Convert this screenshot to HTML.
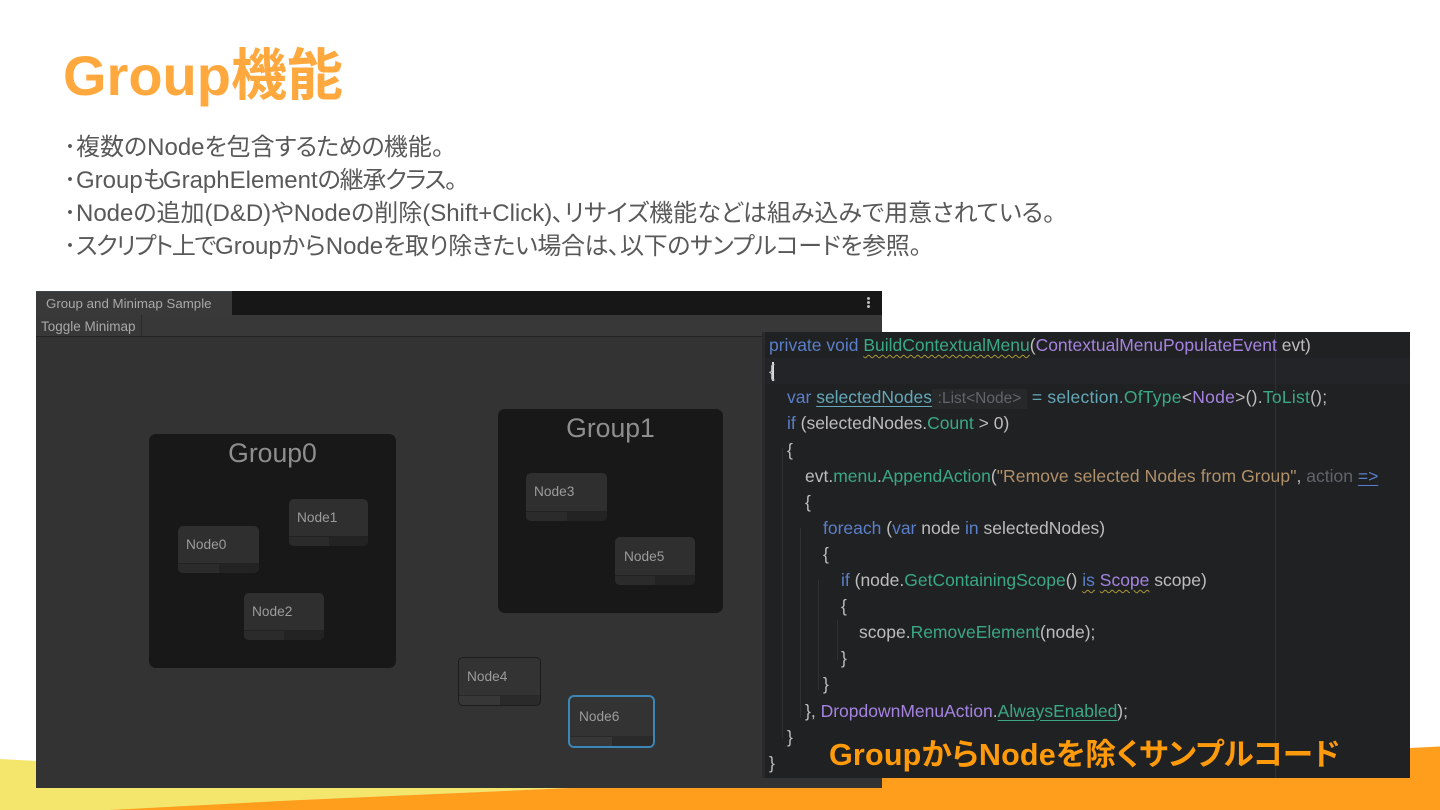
<!DOCTYPE html>
<html lang="ja">
<head>
<meta charset="utf-8">
<title>Group機能</title>
<style>
html,body{margin:0;padding:0;background:#fff;}
body{width:1440px;height:810px;overflow:hidden;position:relative;font-family:"Liberation Sans","Noto Sans CJK JP",sans-serif;}
.a{position:absolute;white-space:nowrap;}
#bg{position:absolute;left:0;top:0;}
.title{left:63px;top:41px;font-size:56px;line-height:70px;font-weight:bold;color:#ffa83e;}
.t{left:64px;font-size:24px;line-height:33px;color:#595959;font-feature-settings:"palt";}
#win{position:absolute;left:36px;top:291px;width:846px;height:497px;background:#333333;overflow:hidden;}
.tab{left:0;top:0;width:196px;height:24px;background:#393939;color:#a8a8a8;font-size:13.3px;line-height:24px;text-indent:10px;border-top:1px solid #3b4650;box-sizing:border-box;}
.tabbar{left:196px;top:0;width:650px;height:24px;background:#171717;}
.tool{left:0;top:24px;width:846px;height:21px;background:#383838;border-bottom:1px solid #232323;}
.tbtn{left:0;top:24px;width:105px;height:21px;border-right:1px solid #2a2a2a;color:#a8a8a8;font-size:13.5px;line-height:23px;text-indent:5px;}
.group{position:absolute;background:#181818;border-radius:7px;}
.gt{position:absolute;left:0;right:0;text-align:center;color:#8e8e8e;font-size:26.6px;line-height:30px;}
.node{position:absolute;background:#2f2f2f;border-radius:5px;overflow:hidden;box-sizing:border-box;}
.node .n{position:absolute;left:8px;top:11px;color:#9c9c9c;font-size:13.7px;line-height:16px;}
.node .b1{position:absolute;left:0;bottom:0;width:50%;height:9px;background:#2b2b2b;border-top:1px solid #222;}
.node .b2{position:absolute;right:0;bottom:0;width:50%;height:9px;background:#232323;border-top:1px solid #222;}
.out{background:#333333}
.out .b1{background:#373737;border-top-color:#292929}
.out .b2{background:#2a2a2a;border-top-color:#292929}
#code{position:absolute;left:762px;top:332px;width:648px;height:446px;background:#202123;overflow:hidden;}
.l{position:absolute;white-space:nowrap;font-size:17.5px;line-height:26px;color:#bdbdbd;}
.k{color:#5b7fc9}.g{color:#3aa885}.p{color:#a583e0}.s{color:#b1916a}.h{color:#62646a}.c{color:#64a8b8}
.w{text-decoration:underline wavy #a89a3a 1px;text-underline-offset:3px}
.u{text-decoration:underline;text-underline-offset:3px}
.hint{display:inline-block;width:95px;font-size:15.5px;background:#27282a;text-align:center;line-height:20px}
.v{position:absolute;width:1px;background:#2f3033}
.cap{left:829px;top:735px;font-size:30.5px;line-height:40px;font-weight:bold;color:#ff9a0a;font-feature-settings:"palt";letter-spacing:.2px;}
</style>
</head>
<body>
<svg id="bg" width="1440" height="810" viewBox="0 0 1440 810">
<polygon points="0,759 300,775 300,810 0,810" fill="#f4e56c"/>
<polygon points="110,810 300,775 900,760 900,790 570,788 300,800" fill="#f4e56c"/>
<polygon points="110,810 300,800 570,788 1410,748 1440,746.5 1440,810" fill="#ff9e1c"/>
</svg>

<div class="a title">Group機能</div>
<div class="a t" style="top:131px">･複数のNodeを包含<span style="letter-spacing:-.8px">するための</span>機能。</div>
<div class="a t" style="top:164px">･Group<span style="letter-spacing:-2.5px">も</span>GraphElement<span style="letter-spacing:-1.2px">の継承クラス。</span></div>
<div class="a t" style="top:197px">･Nodeの追加(D&amp;D)やNodeの削除(Shift+Click)､リサイズ機能などは組み込みで用意されている。</div>
<div class="a t" style="top:230px">･<span style="letter-spacing:-1.5px">スクリプト上で</span>GroupからNode<span style="letter-spacing:-.35px">を取り除きたい場合は､以下のサンプルコードを参照。</span></div>

<div id="win">
  <div class="a tool"></div>
  <div class="a tabbar"></div>
  <div class="a tab">Group and Minimap Sample</div>
  <div class="a tbtn">Toggle Minimap</div>
  <div class="a" style="left:831px;top:6px;width:3px;height:3px;background:#bbb;border-radius:50%;box-shadow:0 4px 0 #bbb,0 8px 0 #bbb"></div>

  <div class="group" style="left:113px;top:143px;width:247px;height:234px">
    <div class="gt" style="top:4px">Group0</div>
  </div>
  <div class="group" style="left:462px;top:118px;width:225px;height:204px">
    <div class="gt" style="top:4px">Group1</div>
  </div>

  <div class="node" style="left:142px;top:235px;width:81px;height:47px"><span class="n">Node0</span><i class="b1"></i><i class="b2"></i></div>
  <div class="node" style="left:253px;top:208px;width:79px;height:47px"><span class="n">Node1</span><i class="b1"></i><i class="b2"></i></div>
  <div class="node" style="left:208px;top:302px;width:80px;height:47px"><span class="n">Node2</span><i class="b1"></i><i class="b2"></i></div>
  <div class="node" style="left:490px;top:182px;width:81px;height:48px"><span class="n">Node3</span><i class="b1"></i><i class="b2"></i></div>
  <div class="node" style="left:579px;top:246px;width:80px;height:48px"><span class="n" style="left:9px;top:12px">Node5</span><i class="b1"></i><i class="b2"></i></div>
  <div class="node out" style="left:422px;top:366px;width:83px;height:49px;border:1px solid #1c1c1c"><span class="n">Node4</span><i class="b1"></i><i class="b2"></i></div>
  <div class="node out" style="left:532px;top:404px;width:87px;height:53px;border:2px solid #3d87b8;border-radius:6px"><span class="n" style="left:9px;top:12px">Node6</span><i class="b1"></i><i class="b2"></i></div>
</div>

<div id="code">
  <div class="a" style="left:0;top:26px;width:648px;height:26px;background:#232427"></div>
  <div class="a" style="left:0;top:0;width:3px;height:446px;background:#2a2a2e"></div>
  <div class="v" style="left:513px;top:0;height:446px"></div>
  <div class="v" style="left:20px;top:116px;height:290px"></div>
  <div class="v" style="left:38px;top:196px;height:190px"></div>
  <div class="v" style="left:56px;top:248px;height:110px"></div>
  <div class="v" style="left:75px;top:288px;height:40px"></div>
  <div class="a" style="left:10px;top:30px;width:2px;height:19px;background:#ddd"></div>

  <div class="l" style="left:7px;top:0"><span class="k">private void</span> <span class="g w">BuildContextualMenu</span>(<span class="p">ContextualMenuPopulateEvent</span> evt)</div>
  <div class="l" style="left:7px;top:26px">{</div>
  <div class="l" style="left:25px;top:52px"><span class="k">var</span> <span class="c u">selectedNodes</span><span class="h hint">:List&lt;Node&gt;</span> <span style="letter-spacing:.25px"><span class="c">= selection.</span><span class="g">OfType</span>&lt;<span class="p">Node</span>&gt;().<span class="g">ToList</span>();</span></div>
  <div class="l" style="left:25px;top:78px"><span class="k">if</span> (selectedNodes.<span class="g">Count</span> &gt; 0)</div>
  <div class="l" style="left:25px;top:105px">{</div>
  <div class="l" style="left:43px;top:131px">evt.<span class="g">menu</span>.<span class="g">AppendAction</span>(<span class="s" style="letter-spacing:.1px">"Remove selected Nodes from Group"</span>, <span class="h">action</span> <span class="k u">=&gt;</span></div>
  <div class="l" style="left:43px;top:157px">{</div>
  <div class="l" style="left:61px;top:183px"><span class="k">foreach</span> (<span class="k">var</span> node <span class="k">in</span> selectedNodes)</div>
  <div class="l" style="left:61px;top:209px">{</div>
  <div class="l" style="left:79px;top:235px"><span class="k">if</span> (node.<span class="g">GetContainingScope</span>() <span class="k w">is</span> <span class="p w">Scope</span> scope)</div>
  <div class="l" style="left:79px;top:261px">{</div>
  <div class="l" style="left:97px;top:287px">scope.<span class="g">RemoveElement</span>(node);</div>
  <div class="l" style="left:79px;top:313px">}</div>
  <div class="l" style="left:61px;top:339px">}</div>
  <div class="l" style="left:43px;top:366px">}, <span class="p">DropdownMenuAction</span>.<span class="g u">AlwaysEnabled</span>);</div>
  <div class="l" style="left:25px;top:392px">}</div>
  <div class="l" style="left:7px;top:418px">}</div>
</div>

<div class="a cap">GroupからNodeを除くサンプルコード</div>
</body>
</html>
